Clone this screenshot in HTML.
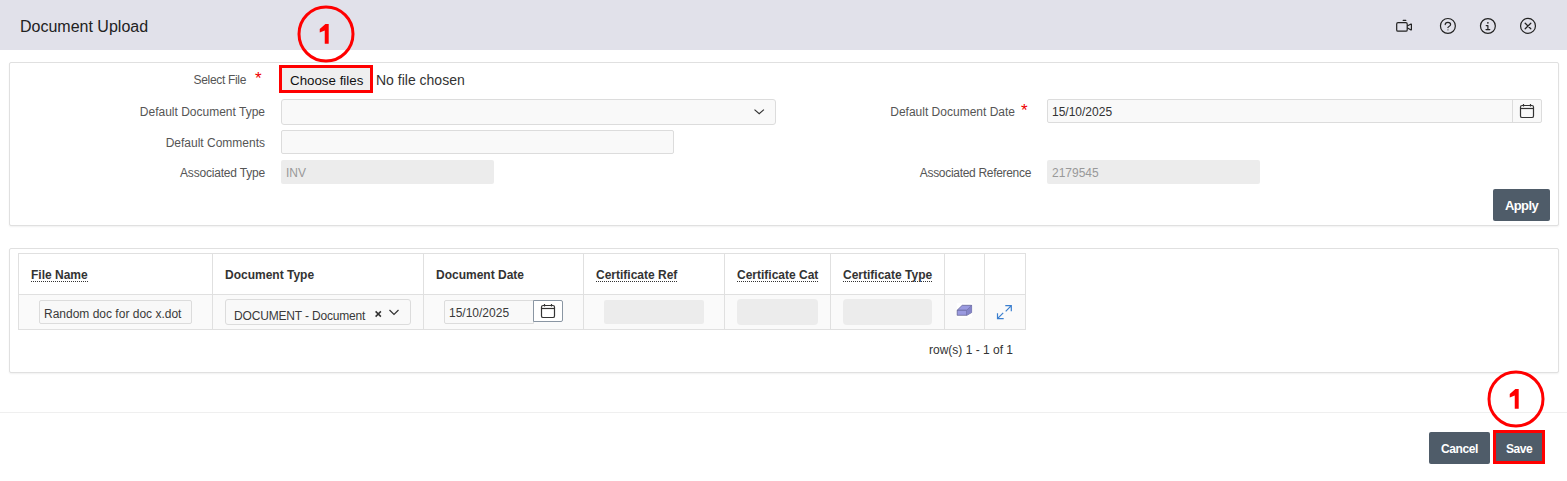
<!DOCTYPE html>
<html>
<head>
<meta charset="utf-8">
<style>
*{box-sizing:border-box;margin:0;padding:0}
html,body{width:1567px;height:481px;overflow:hidden;background:#fff;font-family:"Liberation Sans",sans-serif;color:#333}
.a{position:absolute}
.hdr{left:0;top:0;width:1567px;height:50px;background:#e1e1ea}
.title{left:20px;top:17px;font-size:16px;line-height:20px;color:#222;white-space:nowrap}
.panel{border:1px solid #e0e0e0;border-radius:2px;background:#fff;box-shadow:0 1px 2px rgba(0,0,0,.06)}
.lbl{font-size:12px;line-height:14px;color:#555;white-space:nowrap;text-align:right}
.req{color:#e00;font-size:17px;line-height:17px}
.inp{background:#f9f9f9;border:1px solid #dcdcdc;border-radius:3px}
.dis{background:#ececec;border-radius:2px}
.txt{font-size:12px;line-height:14px;white-space:nowrap}
.btn{background:#4f5c69;border-radius:3px;color:#fff;font-weight:bold;font-size:12px;text-align:center}
.th{font-weight:bold;font-size:12px;line-height:14px;color:#333;white-space:nowrap}
.dot{border-bottom:1px dotted #333;line-height:12px !important}
</style>
</head>
<body>
<div class="a hdr"></div>
<div class="a title">Document Upload</div>

<!-- header icons -->
<svg class="a" style="left:1390px;top:14px" width="150" height="24" viewBox="0 0 150 24">
  <g fill="none" stroke="#222" stroke-width="1.2" stroke-linejoin="round" stroke-linecap="round">
    <rect x="6.7" y="8.6" width="10.5" height="8.6" rx="1.3"/>
    <path d="M13.2 6.4 H15.8"/>
    <path d="M17.6 11.8 L20.6 10.2 H21.4 V15.8 H20.6 L17.6 14"/>
    <circle cx="57.9" cy="11.95" r="7.45"/>
    <path d="M55.2 10.6 C55.2 8.9 56.4 8.3 57.9 8.3 C59.5 8.3 60.6 9.2 60.6 10.4 C60.6 11.9 58.6 12.4 57.9 13.6"/>
    <circle cx="97.9" cy="12" r="7.45"/>
    <path d="M96.2 11.6 H97.9 V15.6 M96 15.6 H99.8"/>
    <circle cx="138" cy="11.9" r="7.45"/>
    <path d="M135.2 9.3 L140.8 14.7 M140.8 9.3 L135.2 14.7" stroke-width="1.3"/>
  </g>
  <rect x="57.4" y="15.3" width="1.1" height="1.1" fill="#555"/>
  <circle cx="97.9" cy="8.8" r="0.85" fill="#222"/>
</svg>

<!-- panel 1 -->
<div class="a panel" style="left:9px;top:62px;width:1550px;height:164px"></div>

<div class="a lbl" style="left:140px;top:73px;width:106px;letter-spacing:-0.33px">Select File</div>
<div class="a req" style="left:255px;top:70px">*</div>
<div class="a" style="left:279px;top:65px;width:94px;height:28px;border:3px solid #f00"></div>
<div class="a" style="left:282px;top:68px;width:88px;height:22px;background:#efefef"></div>
<div class="a txt" style="left:290px;top:73px;font-size:13.33px;line-height:15px;color:#111">Choose files</div>
<div class="a txt" style="left:376px;top:73px;font-size:14px;line-height:15px;color:#333">No file chosen</div>

<div class="a lbl" style="left:100px;top:105px;width:165px">Default Document Type</div>
<div class="a inp" style="left:281px;top:99px;width:495px;height:26px"></div>
<svg class="a" style="left:753px;top:107px" width="12" height="9" viewBox="0 0 12 9"><path d="M1.5 2.6 L6.2 6.6 L10.9 2.6" fill="none" stroke="#333" stroke-width="1.2"/></svg>

<div class="a lbl" style="left:100px;top:136px;width:165px">Default Comments</div>
<div class="a inp" style="left:281px;top:130px;width:393px;height:24px;border-radius:2px"></div>

<div class="a lbl" style="left:100px;top:166px;width:165px;letter-spacing:-0.19px">Associated Type</div>
<div class="a dis" style="left:281px;top:160px;width:213px;height:24px"></div>
<div class="a txt" style="left:286px;top:166px;color:#999">INV</div>

<div class="a lbl" style="left:840px;top:105px;width:175px">Default Document Date</div>
<div class="a req" style="left:1021px;top:102px">*</div>
<div class="a inp" style="left:1047px;top:99px;width:495px;height:24px;border-radius:2px"></div>
<div class="a" style="left:1512px;top:100px;width:1px;height:22px;background:#dcdcdc"></div>
<div class="a txt" style="left:1052px;top:105px;color:#333">15/10/2025</div>
<svg class="a" style="left:1518px;top:102px" width="18" height="18" viewBox="0 0 18 18"><g fill="none" stroke="#333" stroke-width="1.2"><rect x="2.5" y="3.5" width="13" height="12" rx="1.6"/><path d="M2.5 6.5 H15.5"/><path d="M5.5 2.1 V4.6 M12.5 2.1 V4.6"/></g></svg>

<div class="a lbl" style="left:880px;top:166px;width:151px;letter-spacing:-0.31px">Associated Reference</div>
<div class="a dis" style="left:1047px;top:160px;width:213px;height:24px"></div>
<div class="a txt" style="left:1052px;top:166px;color:#999">2179545</div>

<div class="a btn" style="left:1493px;top:189px;width:57px;height:32px;line-height:34px;font-size:13px;letter-spacing:-0.6px;border-radius:2px">Apply</div>

<!-- panel 2 -->
<div class="a panel" style="left:9px;top:248px;width:1550px;height:125px"></div>

<div class="a" style="left:18px;top:253px;width:1008px;height:77px;border:1px solid #e0e0e0"></div>
<div class="a" style="left:19px;top:295px;width:1006px;height:34px;background:#fafafa"></div>
<div class="a" style="left:19px;top:294px;width:1006px;height:1px;background:#e0e0e0"></div>
<div class="a" style="left:212px;top:254px;width:1px;height:75px;background:#e0e0e0"></div>
<div class="a" style="left:423px;top:254px;width:1px;height:75px;background:#e0e0e0"></div>
<div class="a" style="left:583px;top:254px;width:1px;height:75px;background:#e0e0e0"></div>
<div class="a" style="left:724px;top:254px;width:1px;height:75px;background:#e0e0e0"></div>
<div class="a" style="left:830px;top:254px;width:1px;height:75px;background:#e0e0e0"></div>
<div class="a" style="left:944px;top:254px;width:1px;height:75px;background:#e0e0e0"></div>
<div class="a" style="left:984px;top:254px;width:1px;height:75px;background:#e0e0e0"></div>

<div class="a th dot" style="left:31px;top:268.5px">File Name</div>
<div class="a th" style="left:225px;top:268px">Document Type</div>
<div class="a th" style="left:436px;top:268px">Document Date</div>
<div class="a th dot" style="left:596px;top:268.5px">Certificate Ref</div>
<div class="a th dot" style="left:737px;top:268.5px">Certificate Cat</div>
<div class="a th dot" style="left:843px;top:268.5px">Certificate Type</div>

<div class="a inp" style="left:39px;top:300px;width:153px;height:24px;border-radius:2px;background:#f8f8f8"></div>
<div class="a txt" style="left:44px;top:307px;color:#3a3a3a">Random doc for doc x.dot</div>

<div class="a inp" style="left:225px;top:299px;width:186px;height:26px"></div>
<div class="a txt" style="left:234px;top:309px;color:#3a3a3a;letter-spacing:-0.17px">DOCUMENT - Document</div>
<svg class="a" style="left:372px;top:308px" width="12" height="12" viewBox="0 0 12 12"><path d="M3.6 3.4 L8.9 8.6 M8.9 3.4 L3.6 8.6" stroke="#333" stroke-width="1.5"/></svg>
<svg class="a" style="left:388px;top:307px" width="12" height="10" viewBox="0 0 12 10"><path d="M1.5 3 L6 7.5 L10.5 3" fill="none" stroke="#333" stroke-width="1.2"/></svg>

<div class="a inp" style="left:444px;top:300px;width:90px;height:24px;border-radius:2px 0 0 2px"></div>
<div class="a" style="left:533px;top:300px;width:30px;height:22px;border:1px solid #8a96a3;border-radius:0 2px 2px 0;background:#fff"></div>
<div class="a txt" style="left:449px;top:306px;color:#3a3a3a">15/10/2025</div>

<div class="a dis" style="left:604px;top:300px;width:100px;height:24px"></div>
<div class="a dis" style="left:737px;top:299px;width:81px;height:26px;border-radius:4px"></div>
<div class="a dis" style="left:843px;top:299px;width:89px;height:26px;border-radius:4px"></div>

<svg class="a" style="left:539px;top:302px" width="18" height="18" viewBox="0 0 18 18"><g fill="none" stroke="#333" stroke-width="1.2"><rect x="2.5" y="3.5" width="13" height="12" rx="1.6"/><path d="M2.5 6.5 H15.5"/><path d="M5.5 2.1 V4.6 M12.5 2.1 V4.6"/></g></svg>
<svg class="a" style="left:954px;top:302px" width="20" height="18" viewBox="0 0 20 18"><rect x="2.8" y="1.1" width="15.2" height="14.6" fill="#fff"/><path d="M3.2 13.3 V8.2 L8.2 3.3 H17.6 V10.6 L12.8 13.3 Z" fill="#9a9ae0" stroke="#5a5a8a" stroke-width="0.7"/><path d="M3.2 8.2 H12.8 L17.6 3.3 M12.8 8.2 V13.3" fill="none" stroke="#5a5a8a" stroke-width="0.7"/><path d="M12.8 8.2 L17.6 3.3 V10.6 L12.8 13.3Z" fill="#8585c8"/></svg>
<svg class="a" style="left:994px;top:302px" width="22" height="20" viewBox="0 0 22 20"><g fill="none" stroke="#3b7fcf" stroke-width="1.2"><path d="M11.3 3.7 H17.3 V9.3 M17.3 3.7 L11.7 9.3"/><path d="M3.5 11.2 V16.6 H9.7 M3.5 16.6 L9.2 10.9"/></g></svg>
<div class="a txt" style="left:929px;top:343px;color:#333">row(s) 1 - 1 of 1</div>

<!-- footer -->
<div class="a" style="left:0;top:412px;width:1567px;height:1px;background:#efefef"></div>
<div class="a btn" style="left:1429px;top:432px;width:61px;height:32px;line-height:35px;letter-spacing:-0.4px;border-radius:2px">Cancel</div>
<div class="a" style="left:1493px;top:430px;width:52px;height:34px;border:3px solid #f00"></div>
<div class="a btn" style="left:1496px;top:433px;width:46px;height:28px;line-height:32px;border-radius:0;letter-spacing:-0.45px">Save</div>

<!-- annotation circles -->
<svg class="a" style="left:296px;top:3.950000000000003px" width="60" height="60" viewBox="-30 -30 60 60"><circle cx="0" cy="0" r="27" fill="none" stroke="#f00" stroke-width="3"/><path d="M-0.6 -10.1 H2.7 V9.75 H-1.25 V-3.6 L-6.25 -1.4 V-4.9 Z" fill="#f00"/></svg>
<svg class="a" style="left:1486.2px;top:369.3px" width="60" height="60" viewBox="-30 -30 60 60"><circle cx="0" cy="0" r="27" fill="none" stroke="#f00" stroke-width="3"/><path d="M-0.6 -10.1 H2.7 V9.75 H-1.25 V-3.6 L-6.25 -1.4 V-4.9 Z" fill="#f00"/></svg>
</body>
</html>
